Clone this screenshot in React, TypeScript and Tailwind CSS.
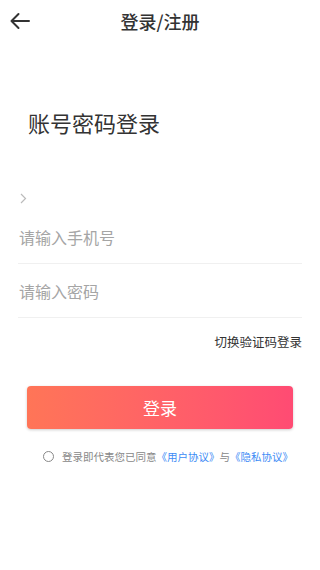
import React from "react";

export default function App() {
  const font = { fontFamily: '"Noto Sans CJK SC", "Noto Sans", sans-serif' };
  return (
    <div className="w-[320px] h-[570px] bg-white flex flex-col" style={font}>
      <div className="relative h-[42px] flex items-center justify-center">
        <svg className="absolute left-[9px] top-[12px]" width="22" height="18" viewBox="0 0 22 18" fill="none" stroke="#333" strokeWidth="2" strokeLinecap="round" strokeLinejoin="round">
          <path d="M20 9H2.5M9.5 2L2.5 9l7 7" />
        </svg>
        <span className="text-[18px] font-medium text-[#333] leading-none">登录/注册</span>
      </div>
      <div className="pl-[28px] pt-[64px] text-[22px] text-[#333] leading-[32px]">账号密码登录</div>
      <div className="pl-[20px] pt-[55px] text-[#bbb] text-[14px] leading-none">
        <svg width="7" height="11" viewBox="0 0 7 11" fill="none" stroke="#bbb" strokeWidth="1.2"><path d="M1 1l4.5 4.5L1 10" /></svg>
      </div>
      <div className="mx-[18px] mt-[6px] flex flex-col">
        <div className="h-[54px] flex items-center border-b border-[#f0f0f0] text-[16px] text-[#a5a5a5] pl-[1px]">请输入手机号</div>
        <div className="h-[54px] flex items-center border-b border-[#f0f0f0] text-[16px] text-[#a5a5a5] pl-[1px]">请输入密码</div>
      </div>
      <div className="flex justify-end pr-[18px] pt-[15px] text-[12.5px] text-[#333] leading-[18px]">切换验证码登录</div>
      <div className="mx-[27px] mt-[35px] h-[43px] rounded-[4px] bg-gradient-to-r from-[#ff7557] to-[#ff4b73] shadow-[0_1px_3px_rgba(0,0,0,0.2)] flex items-center justify-center text-white text-[17px]">登录</div>
      <div className="flex items-center pl-[43px] mt-[20px] text-[10.5px] text-[#888] gap-[8px]">
        <span className="w-[11px] h-[11px] rounded-full border border-[#888] inline-block"></span>
        <span>登录即代表您已同意<span className="text-[#3d8bf5]">《用户协议》</span>与<span className="text-[#3d8bf5]">《隐私协议》</span></span>
      </div>
    </div>
  );
}
